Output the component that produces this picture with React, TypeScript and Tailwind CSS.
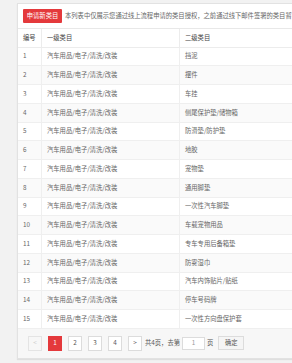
import React from "react";

const rows: [number, string][] = [
  [1, "挡泥"],
  [2, "摆件"],
  [3, "车挂"],
  [4, "侧尾保护垫/储物箱"],
  [5, "防滑垫/防护垫"],
  [6, "地胶"],
  [7, "宠物垫"],
  [8, "通用脚垫"],
  [9, "一次性汽车脚垫"],
  [10, "车载宠物用品"],
  [11, "专车专用后备箱垫"],
  [12, "防雾湿巾"],
  [13, "汽车内饰贴片/贴纸"],
  [14, "停车号码牌"],
  [15, "一次性方向盘保护套"],
];

export default function App() {
  return (
    <div
      className="w-[292px] h-[363px] overflow-hidden bg-[#f2f2f2] pt-[3px] pl-[17px] text-[6.3px] leading-none text-[#666]"
      style={{ fontFamily: '"Noto Sans CJK SC", "Noto Sans", sans-serif' }}
    >
      <div className="w-[300px] bg-white border border-[#e2e2e2] shadow-[0_1px_1px_rgba(0,0,0,0.08)]">
        <div className="h-[25px] flex items-center pl-[5px] border-b border-[#e8e8e8] whitespace-nowrap overflow-hidden">
          <div className="h-[14px] w-[39px] shrink-0 bg-[#e4393c] text-white flex items-center justify-center rounded-[1px]">
            申请新类目
          </div>
          <span className="ml-[3px] text-[#666]">
            本列表中仅展示您通过线上流程申请的类目授权，之前通过线下邮件签署的类目暂不展示
          </span>
        </div>
        <div className="flex h-[18.7px] items-center border-b border-[#ececec] text-[#444]">
          <div className="w-[24px] pl-[5px] h-full flex items-center border-r border-[#ececec]">编号</div>
          <div className="w-[138px] pl-[5px] h-full flex items-center border-r border-[#ececec]">一级类目</div>
          <div className="pl-[5px]">二级类目</div>
        </div>
        {rows.map(([n, name]) => (
          <div
            key={n}
            className={`flex h-[18.75px] items-center border-b border-[#efefef] ${n % 2 === 0 ? "bg-[#fafafa]" : "bg-white"}`}
          >
            <div className="w-[24px] pl-[5px] h-full flex items-center border-r border-[#efefef]">{n}</div>
            <div className="w-[138px] pl-[5px] h-full flex items-center border-r border-[#efefef]">汽车用品/电子/清洗/改装</div>
            <div className="pl-[5px]">{name}</div>
          </div>
        ))}
        <div className="h-[29px] bg-[#f7f7f7] flex items-center pl-[10px] whitespace-nowrap text-[#555]">
          <div className="flex gap-[6px]">
            <div className="w-[14px] h-[15px] border border-[#e4e4e4] bg-[#f7f7f7] text-[#ccc] flex items-center justify-center">&lt;</div>
            <div className="w-[14px] h-[15px] bg-[#e4393c] text-white flex items-center justify-center">1</div>
            <div className="w-[14px] h-[15px] border border-[#dcdcdc] bg-white flex items-center justify-center">2</div>
            <div className="w-[14px] h-[15px] border border-[#dcdcdc] bg-white flex items-center justify-center">3</div>
            <div className="w-[14px] h-[15px] border border-[#dcdcdc] bg-white flex items-center justify-center">4</div>
            <div className="w-[14px] h-[15px] border border-[#dcdcdc] bg-white flex items-center justify-center">&gt;</div>
          </div>
          <span className="ml-[3px]">共4页，去第</span>
          <div className="ml-[2px] w-[23px] h-[13px] border border-[#dcdcdc] bg-white flex items-center justify-center text-[#999]">1</div>
          <span className="ml-[2px]">页</span>
          <div className="ml-[5px] w-[26px] h-[14px] border border-[#dcdcdc] bg-[#f5f5f5] flex items-center justify-center">确定</div>
        </div>
      </div>
    </div>
  );
}
